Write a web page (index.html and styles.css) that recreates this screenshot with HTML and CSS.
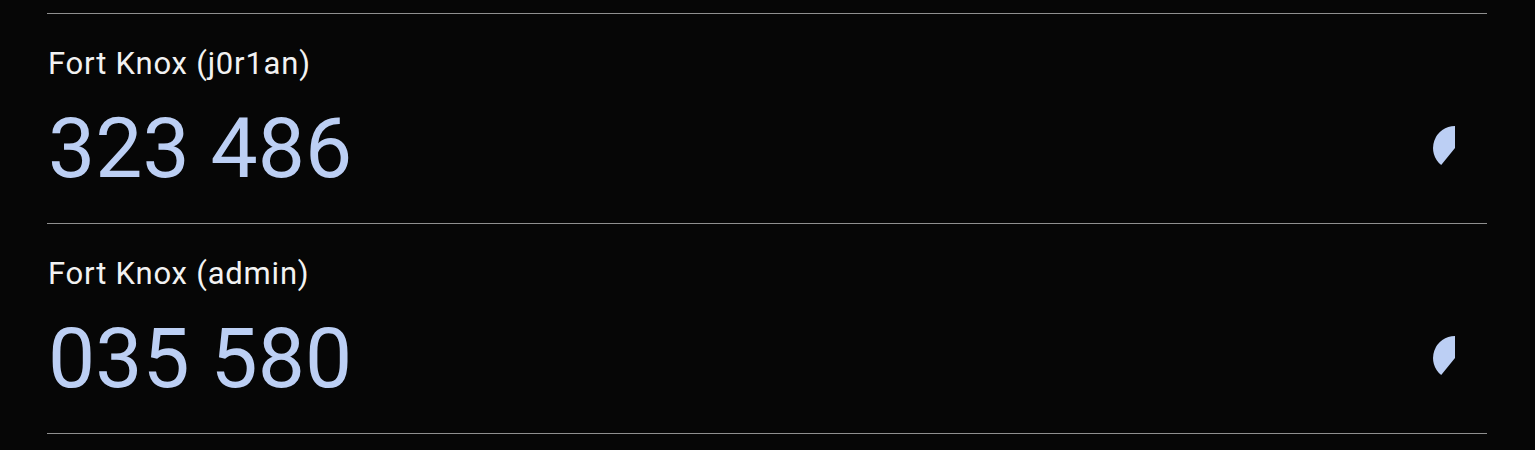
FILE: index.html
```html
<!DOCTYPE html>
<html>
<head>
<meta charset="utf-8">
<link rel="stylesheet" href="styles.css">
</head>
<body>
<div class="list">
  <div class="item">
    <div class="info">
      <div class="label">Fort Knox (j0r1an)</div>
      <div class="code">323 486</div>
    </div>
    <svg class="timer" width="44" height="44" viewBox="0 0 44 44"><path d="M22 22 L22 0 A22 22 0 0 0 8.2 39.1 Z" fill="#bccff4"/></svg>
  </div>
  <div class="item">
    <div class="info">
      <div class="label">Fort Knox (admin)</div>
      <div class="code">035 580</div>
    </div>
    <svg class="timer" width="44" height="44" viewBox="0 0 44 44"><path d="M22 22 L22 0 A22 22 0 0 0 8.2 39.1 Z" fill="#bccff4"/></svg>
  </div>
</div>
</body>
</html>
```
FILE: styles.css
```css
html, body {
  margin: 0;
  background: #060606;
}
body {
  font-family: Roboto, "Noto Sans", sans-serif;
}
.list {
  padding: 13px 48px 0 47px;
}
.item {
  display: flex;
  justify-content: space-between;
  align-items: flex-start;
  height: 209px;
  border-top: 1px solid #8f8f8f;
}
.item:last-child {
  border-bottom: 1px solid #8f8f8f;
}
.info {
  padding-top: 32px;
  padding-left: 1px;
}
.label {
  color: #f2f2f2;
  font-size: 31px;
  line-height: 36px;
  letter-spacing: 0.8px;
}
.code {
  color: #bccff4;
  font-size: 84px;
  line-height: 100px;
  margin-top: 17px;
}
.timer {
  margin-top: 112px;
  margin-right: 10px;
}
```
